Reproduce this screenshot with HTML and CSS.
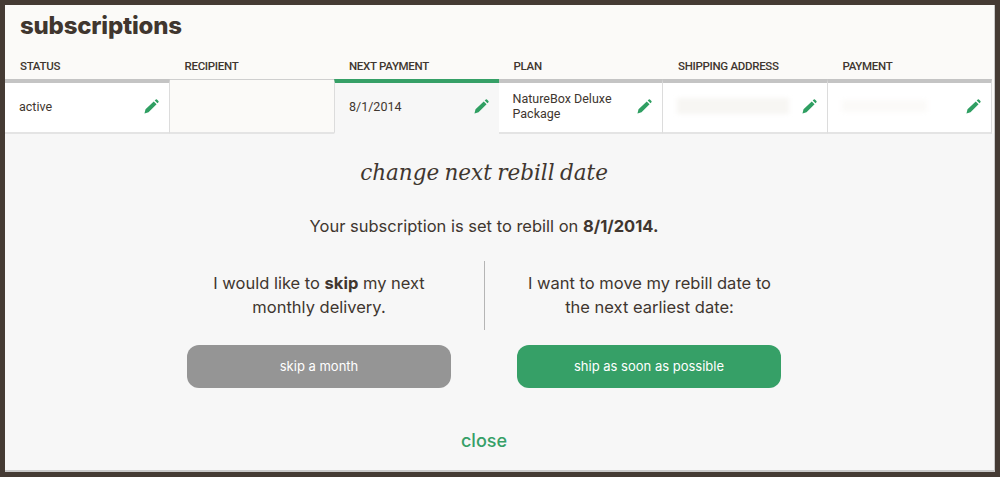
FILE: index.html
```html
<!DOCTYPE html>
<html lang="en">
<head>
    <meta charset="UTF-8">
    <title>Subscriptions</title>
    <link rel="stylesheet" href="styles.css">
</head>
<body>
    <svg class="icon-defs" width="0" height="0">
        <symbol id="pencil" viewBox="0 0 16 16">
            <path d="M0.5 15.5 L1.6 11 L10.4 2.6 L13.4 5.6 L4.8 14.2 Z M11.4 1.6 L12.6 0.5 Q13.2 0 13.8 0.5 L15.4 2.2 Q15.9 2.8 15.4 3.4 L14.4 4.6 Z"/>
        </symbol>
    </svg>
    <div class="frame">
        <h1 class="title">subscriptions</h1>
        <div class="tabs">
            <div class="tab">
                <div class="tab-label">STATUS</div>
                <div class="tab-cell tab-white">
                    <span class="cell-text">active</span>
                    <svg class="pencil"><use href="#pencil"/></svg>
                </div>
            </div>
            <div class="tab tab-empty">
                <div class="tab-label">RECIPIENT</div>
                <div class="tab-cell"></div>
            </div>
            <div class="tab tab-active">
                <div class="tab-label">NEXT PAYMENT</div>
                <div class="tab-cell">
                    <span class="cell-text">8/1/2014</span>
                    <svg class="pencil"><use href="#pencil"/></svg>
                </div>
            </div>
            <div class="tab">
                <div class="tab-label">PLAN</div>
                <div class="tab-cell tab-white">
                    <span class="cell-text">NatureBox Deluxe Package</span>
                    <svg class="pencil"><use href="#pencil"/></svg>
                </div>
            </div>
            <div class="tab">
                <div class="tab-label">SHIPPING ADDRESS</div>
                <div class="tab-cell tab-white">
                    <span class="cell-text"><span class="blurred blurred-wide"></span></span>
                    <svg class="pencil"><use href="#pencil"/></svg>
                </div>
            </div>
            <div class="tab">
                <div class="tab-label">PAYMENT</div>
                <div class="tab-cell tab-white">
                    <span class="cell-text"><span class="blurred"></span></span>
                    <svg class="pencil"><use href="#pencil"/></svg>
                </div>
            </div>
        </div>
        <div class="panel">
            <h2 class="panel-title">change next rebill date</h2>
            <p class="panel-intro">Your subscription is set to rebill on <b>8/1/2014.</b></p>
            <div class="choices">
                <div class="choice">
                    <p class="choice-text">I would like to <b>skip</b> my next<br>monthly delivery.</p>
                    <a class="button button-grey" href="#">skip a month</a>
                </div>
                <div class="choice choice-right">
                    <p class="choice-text">I want to move my rebill date to<br>the next earliest date:</p>
                    <a class="button button-green" href="#">ship as soon as possible</a>
                </div>
            </div>
            <a class="close" href="#">close</a>
        </div>
    </div>
</body>
</html>
```

FILE: styles.css
```css
html, body {
    margin: 0;
    padding: 0;
}
body {
    width: 1000px;
    height: 477px;
    overflow: hidden;
    font-family: 'Inter', sans-serif;
    color: #40362f;
    background-color: #f7f7f7;
}
.icon-defs {
    display: block;
    height: 0;
}
.frame {
    box-sizing: border-box;
    height: 477px;
    border: 5px solid #453b34;
    background-color: #f7f7f7;
    background-image: linear-gradient(#fbfaf8, #fbfaf8);
    background-size: 100% 128px;
    background-repeat: no-repeat;
    box-shadow: inset -1px -2px 0 #c9c9c9;
}
.title {
    margin: 0;
    padding: 8px 0 0 15px;
    height: 46px;
    box-sizing: border-box;
    font-family: 'Inter', sans-serif;
    font-weight: 800;
    font-size: 24px;
    line-height: 26px;
    letter-spacing: -0.2px;
    color: #40362f;
}
.tabs {
    display: flex;
    width: 986px;
}
.tab {
    width: 164.5px;
    flex: none;
}
.tab-label {
    height: 28px;
    padding: 8px 0 0 15px;
    box-sizing: border-box;
    font-family: 'Roboto', sans-serif;
    font-weight: 500;
    font-size: 11.5px;
    line-height: 14px;
    letter-spacing: -0.3px;
    color: #40362f;
}
.tab-cell {
    box-sizing: border-box;
    height: 55px;
    display: flex;
    align-items: center;
    justify-content: space-between;
    padding: 0 10px 3px 14px;
    border-right: 1px solid #dcdcdc;
    border-bottom: 2px solid #e4e4e4;
    border-top: 4px solid #c4c4c4;
    font-family: 'Roboto', sans-serif;
    font-size: 12.5px;
    line-height: 15px;
    color: #40362f;
}
.tab-white {
    background-color: #fff;
}
.tab-empty .tab-cell {
    border-top: 1px solid #cfcfcf;
    border-right: none;
}
.tab-active .tab-cell {
    border-top-color: #36a067;
    border-left: 1px solid #dcdcdc;
    border-right: none;
    border-bottom-color: transparent;
    background-color: #f7f7f7;
}
.cell-text {
    width: 118px;
}
.blurred {
    display: block;
    width: 85px;
    height: 12px;
    background-color: #fbfaf8;
    filter: blur(2px);
}
.blurred-wide {
    width: 112px;
    height: 16px;
    background-color: #f7f6f3;
}
.pencil {
    width: 15px;
    height: 15px;
    flex: none;
    fill: #2f9f62;
}
.panel {
    text-align: center;
    width: 958px;
}
.panel-title {
    margin: 0;
    padding-top: 23px;
    font-family: 'DejaVu Serif', serif;
    font-style: italic;
    font-weight: 400;
    font-size: 21.5px;
    line-height: 32px;
    word-spacing: -1.5px;
    color: #40362f;
}
.panel-intro {
    margin: 0;
    padding-top: 27px;
    font-size: 16.5px;
    line-height: 20px;
    color: #40362f;
}
.choices {
    display: flex;
    justify-content: center;
    margin-top: 25px;
}
.choice {
    width: 330px;
    display: flex;
    flex-direction: column;
    align-items: center;
}
.choice-text {
    margin: 0;
    box-sizing: border-box;
    width: 100%;
    height: 69px;
    padding-top: 10px;
    font-size: 16.5px;
    line-height: 24px;
}
.choice-right .choice-text {
    border-left: 1px solid #b5b5b5;
}
.button {
    display: block;
    box-sizing: border-box;
    width: 264px;
    height: 43px;
    margin-top: 15px;
    border-radius: 12px;
    font-size: 13px;
    line-height: 42px;
    color: #fff;
    text-decoration: none;
}
.button-grey {
    background-color: #959595;
}
.button-green {
    background-color: #36a067;
}
.close {
    display: block;
    margin-top: 41px;
    font-size: 18px;
    font-weight: 500;
    line-height: 24px;
    color: #36a067;
    text-decoration: none;
}
```
